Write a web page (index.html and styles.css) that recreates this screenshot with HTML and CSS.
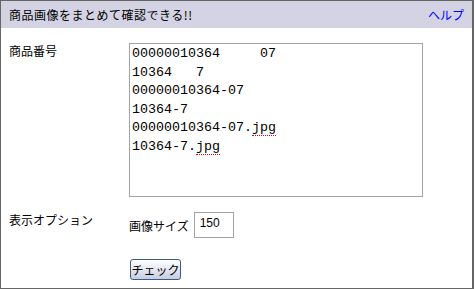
FILE: index.html
```html
<!DOCTYPE html>
<html lang="ja">
<head>
    <meta charset="UTF-8">
    <meta name="viewport" content="width=device-width, initial-scale=1.0">
    <title>商品画像をまとめて確認できる!!</title>
    <link rel="stylesheet" href="styles.css">
</head>
<body>
    <div class="panel">
        <div class="head">
            <span class="title">商品画像をまとめて確認できる!!</span>
            <a class="help" href="#">ヘルプ</a>
        </div>
        <div class="form">
            <div class="row">
                <div class="label">商品番号</div>
                <div class="field">
                    <div class="codes">
                        <div class="line">00000010364     07</div>
                        <div class="line">10364   7</div>
                        <div class="line">00000010364-07</div>
                        <div class="line">10364-7</div>
                        <div class="line">00000010364-07.<span class="typo">jpg</span></div>
                        <div class="line">10364-7.<span class="typo">jpg</span></div>
                    </div>
                </div>
            </div>
            <div class="row opt">
                <div class="label">表示オプション</div>
                <div class="field inline">
                    <span>画像サイズ</span>
                    <input type="text" class="size" value="150">
                </div>
            </div>
            <div class="row btn-row">
                <div class="label"></div>
                <div class="field">
                    <button class="check">チェック</button>
                </div>
            </div>
        </div>
    </div>
</body>
</html>
```

FILE: styles.css
```css
body {
    margin: 0;
    font-family: "Noto Sans CJK JP", "Liberation Sans", sans-serif;
    font-size: 12px;
    color: #000;
    background-color: #fff;
}
.panel {
    box-sizing: border-box;
    width: 474px;
    height: 289px;
    border: 1px solid #666;
    border-right-width: 2px;
}
.head {
    height: 27px;
    display: flex;
    align-items: center;
    justify-content: space-between;
    padding: 0 8px 0 8px;
    background-color: #d3d3e3;
}
.title {
    letter-spacing: 0.5px;
}
.help {
    color: #0000ff;
    text-decoration: none;
}
.form {
    padding: 15px 0 0 8px;
}
.row {
    display: flex;
    align-items: flex-start;
}
.label {
    width: 120px;
    line-height: 16px;
}
.codes {
    box-sizing: border-box;
    width: 294px;
    height: 154px;
    border: 1px solid #a0a4a8;
    padding: 1px 2px;
    font-family: "Liberation Mono", monospace;
    font-size: 13.33px;
    line-height: 18.6px;
}
.line {
    white-space: pre;
}
.typo {
    border-bottom: 1px dotted #e00000;
}
.opt {
    margin-top: 15px;
}
.inline {
    display: flex;
    align-items: center;
    gap: 5px;
    height: 26px;
}
.size {
    box-sizing: border-box;
    width: 40px;
    height: 26px;
    border: 1px solid #a0a4a8;
    padding: 0 5px 5px;
    font-family: "Liberation Sans", sans-serif;
    font-size: 12px;
}
.btn-row {
    margin-top: 21px;
}
.check {
    box-sizing: border-box;
    width: 51px;
    height: 21px;
    margin-left: 1px;
    padding: 0;
    border: 1px solid #3c5a84;
    border-radius: 3px;
    background: linear-gradient(#ffffff, #c6cde0);
    font-family: "Noto Sans CJK JP", sans-serif;
    font-size: 12px;
    color: #000;
}
```
